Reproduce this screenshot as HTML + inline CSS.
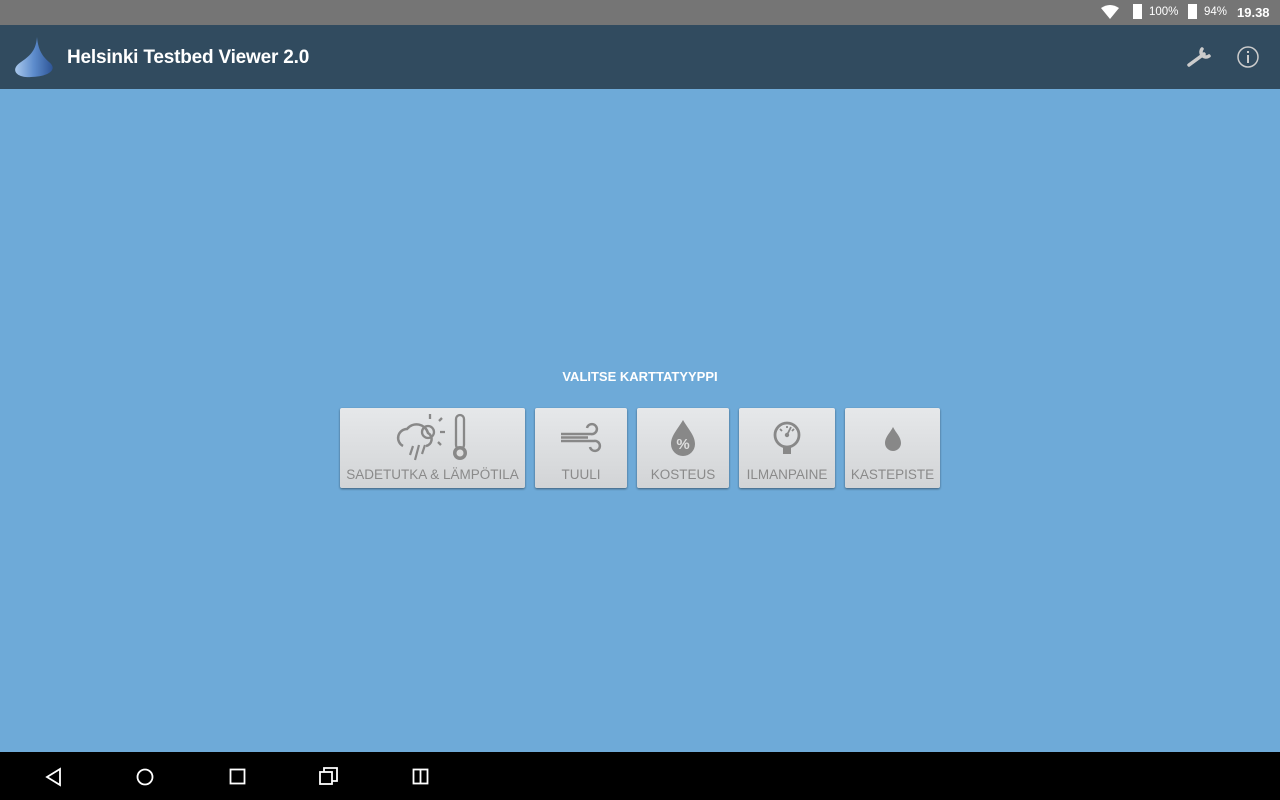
<!DOCTYPE html>
<html><head><style>
body{margin:0;width:1280px;height:800px;overflow:hidden;background:#6eaad8;font-family:"Liberation Sans",sans-serif;position:relative}
.sb{position:absolute;top:0;left:0;width:1280px;height:25px;background:#757575;color:#fff;font-size:12px}
.ab{position:absolute;top:25px;left:0;width:1280px;height:64px;background:#314b5f}
.title{position:absolute;left:67px;top:47px;color:#fff;font-size:19px;font-weight:bold;letter-spacing:-0.2px}
.nav{position:absolute;top:752px;left:0;width:1280px;height:48px;background:#000}
.lbl{position:absolute;top:369px;left:0;width:1280px;text-align:center;color:#fff;font-size:13px;font-weight:bold}
.btn{position:absolute;top:408px;height:80px;background:linear-gradient(#e6e8ea,#d2d4d6);box-shadow:0 1px 2px rgba(0,0,0,.45);border-radius:2px;color:#8a8a8a;font-size:13.5px;text-align:center}
.btn span{position:absolute;left:0;right:0;top:59px}
.btn svg{position:absolute;left:50%;top:4px;transform:translateX(-50%)}
</style></head><body>
<div class="sb">
<svg style="position:absolute;left:1101px;top:5px" width="18" height="14"><path d="M0 3Q9 -3 18 3L9 14Z" fill="#fff"/></svg>
<div style="position:absolute;left:1133px;top:4px;width:9px;height:15px;background:#fff"></div>
<span style="position:absolute;left:1149px;top:6px;font-size:11.5px">100%</span>
<div style="position:absolute;left:1188px;top:4px;width:9px;height:15px;background:#fff"></div>
<span style="position:absolute;left:1204px;top:6px;font-size:11.5px">94%</span>
<span style="position:absolute;left:1237px;top:5px;font-size:13px;font-weight:bold">19.38</span>
</div>
<div class="ab">
<svg style="position:absolute;left:9px;top:11px" width="46" height="42"><defs><linearGradient id="g" x1="0" x2="1"><stop offset="0" stop-color="#a9c8ec"/><stop offset=".5" stop-color="#5d8ccc"/><stop offset="1" stop-color="#2e5597"/></linearGradient></defs><path d="M28 1C27 12 24 18 12 26 0 34 8 42 22 41 38 41 50 34 40 26 32 19 29 12 28 1Z" fill="url(#g)"/></svg>
<svg style="position:absolute;left:1186px;top:20px" width="30" height="24"><path d="M3 20L18 9M16 4a5 5 0 0 0 7 7" stroke="#ccc" stroke-width="3.5" fill="none" stroke-linecap="round"/></svg>
<svg style="position:absolute;left:1236px;top:20px" width="24" height="24"><circle cx="12" cy="12" r="10" stroke="#ccc" stroke-width="1.5" fill="none"/><rect x="11" y="10" width="2" height="8" fill="#ccc"/><rect x="11" y="6" width="2" height="2" fill="#ccc"/></svg>
</div>
<div class="title">Helsinki Testbed Viewer 2.0</div>
<div class="lbl">VALITSE KARTTATYYPPI</div>
<div class="btn" style="left:340px;width:185px"><svg width="80" height="52"><path d="M10 34a9 9 0 0 1 4-17 12 12 0 0 1 21 4 7 7 0 0 1-2 13" stroke="#888" stroke-width="2.5" fill="none"/><path d="M20 34l-3 9M26 33l-4 15M32 33l-3 9" stroke="#888" stroke-width="2.2"/><circle cx="35" cy="20" r="6" stroke="#888" stroke-width="2.3" fill="none"/><path d="M37 2v5M46 9l3-3M47 20h5M45 30l3 3" stroke="#888" stroke-width="2.3"/><rect x="63" y="3" width="8" height="34" rx="4" stroke="#888" stroke-width="2.3" fill="none"/><circle cx="67" cy="41" r="7" fill="#888"/><circle cx="67" cy="41" r="3.5" fill="#ddd"/></svg><span>SADETUTKA &amp; LÄMPÖTILA</span></div>
<div class="btn" style="left:535px;width:92px"><svg width="50" height="44"><path d="M5 22h30a5 5 0 1 0-4-6M5 29h33a5 5 0 1 1-4 6M5 25.5h27" stroke="#888" stroke-width="2.5" fill="none"/></svg><span>TUULI</span></div>
<div class="btn" style="left:637px;width:92px"><svg width="40" height="48"><path d="M20 8C14 18 8 24 8 32a12 12 0 0 0 24 0C32 24 26 18 20 8Z" fill="#888"/><text x="20" y="37" font-size="15" font-weight="bold" fill="#ddd" text-anchor="middle" font-family="Liberation Sans">%</text></svg><span>KOSTEUS</span></div>
<div class="btn" style="left:739px;width:96px"><svg width="40" height="48"><circle cx="20" cy="23" r="12" stroke="#888" stroke-width="2.8" fill="none"/><path d="M20 23l4-8M13 17l2 2M20 14v2M27 17l-2 2" stroke="#888" stroke-width="1.8"/><circle cx="20" cy="23" r="2.2" fill="#888"/><rect x="16" y="35" width="8" height="7" fill="#888"/></svg><span>ILMANPAINE</span></div>
<div class="btn" style="left:845px;width:95px"><svg width="40" height="48"><path d="M20 15C17 21 12 25 12 31a8 8 0 0 0 16 0C28 25 23 21 20 15Z" fill="#888"/></svg><span>KASTEPISTE</span></div>
<div class="nav">
<svg style="position:absolute;left:44px;top:15px" width="20" height="20"><path d="M16 2L3 10l13 8Z" stroke="#fff" stroke-width="1.8" fill="none"/></svg>
<svg style="position:absolute;left:135px;top:15px" width="20" height="20"><circle cx="10" cy="10" r="7.5" stroke="#fff" stroke-width="1.8" fill="none"/></svg>
<svg style="position:absolute;left:228px;top:15px" width="20" height="20"><rect x="2.5" y="2.5" width="14" height="14" stroke="#fff" stroke-width="1.8" fill="none"/></svg>
<svg style="position:absolute;left:318px;top:14px" width="22" height="22"><rect x="2" y="6" width="12" height="12" stroke="#fff" stroke-width="1.8" fill="none"/><path d="M6 6V2h13v13h-5" stroke="#fff" stroke-width="1.8" fill="none"/></svg>
<svg style="position:absolute;left:411px;top:15px" width="20" height="20"><rect x="2.5" y="2.5" width="14" height="14" stroke="#fff" stroke-width="1.8" fill="none"/><path d="M9.5 2v15" stroke="#fff" stroke-width="1.8"/></svg>
</div>
</body></html>
